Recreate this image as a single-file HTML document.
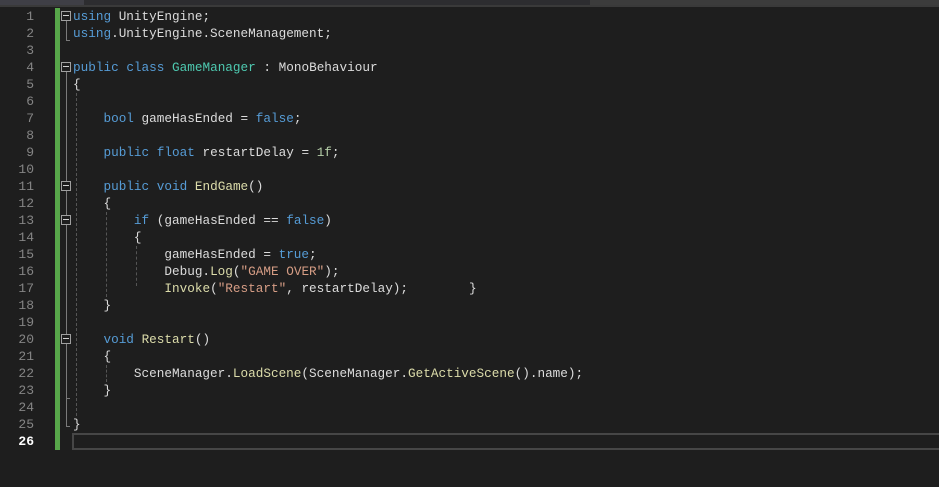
<!DOCTYPE html>
<html><head><style>
body{margin:0;width:939px;height:487px;background:#1e1e1e;overflow:hidden;position:relative;font-family:"Liberation Mono",monospace;}
.top{position:absolute;left:0;top:0;width:939px;height:6px;background:#2d2d30;}
.top .t1{position:absolute;left:0;top:0;width:84px;height:5px;background:#3f3f46;}
.top .t2{position:absolute;left:590px;top:0;width:349px;height:6px;background:#3c3c3c;}
.top .t3{position:absolute;left:0;top:5px;width:939px;height:2px;background:#3a3a3a;}
.ln{position:absolute;left:0;width:34px;text-align:right;color:#858585;font-size:13px;line-height:17px;}
.green{position:absolute;left:55px;top:8px;width:5px;height:442px;background:#57a64a;}
.code{position:absolute;left:73px;top:8px;font-size:12.7px;line-height:17px;color:#dcdcdc;white-space:pre;}
.k{color:#569cd6}.c{color:#4ec9b0}.m{color:#dcdcaa}.s{color:#d69d85}.n{color:#b5cea8}
.fold{position:absolute;left:61px;width:10px;height:10px;border:1px solid #a0a0a0;box-sizing:border-box;background:#1e1e1e;}
.fold:after{content:"";position:absolute;left:1px;top:3px;width:6px;height:1px;background:#d0d0d0;}
.vl{position:absolute;width:1px;background:#7a7a7a;}
.dl{position:absolute;width:0;border-left:1px dashed #555;}
.cur{position:absolute;left:72px;top:433px;width:870px;height:17px;border:2px solid #464646;box-sizing:border-box;}
</style></head><body>
<div class="top"><div class="t1"></div><div class="t2"></div><div class="t3"></div></div>
<div class="ln" style="top:8px">1<br>2<br>3<br>4<br>5<br>6<br>7<br>8<br>9<br>10<br>11<br>12<br>13<br>14<br>15<br>16<br>17<br>18<br>19<br>20<br>21<br>22<br>23<br>24<br>25<br><span style="color:#fff;font-weight:bold">26</span></div>
<div class="green"></div>
<div class="vl" style="left:66px;top:20px;height:21px"></div>
<div class="vl" style="left:66px;top:40px;width:4px;height:1px"></div>
<div class="fold" style="top:11px"></div>
<div class="vl" style="left:66px;top:71px;height:356px"></div>
<div class="vl" style="left:66px;top:426px;width:4px;height:1px"></div>
<div class="fold" style="top:62px"></div>
<div class="fold" style="top:181px"></div>
<div class="fold" style="top:215px"></div>
<div class="fold" style="top:334px"></div>
<div class="vl" style="left:66px;top:398px;width:4px;height:1px"></div>
<div class="dl" style="left:76px;top:93px;height:323px"></div>
<div class="dl" style="left:106px;top:212px;height:85px"></div>
<div class="dl" style="left:136px;top:246px;height:40px"></div>
<div class="dl" style="left:106px;top:365px;height:17px"></div>
<div class="code"><span class="k">using</span> UnityEngine;
<span class="k">using</span>.UnityEngine.SceneManagement;

<span class="k">public</span> <span class="k">class</span> <span class="c">GameManager</span> : MonoBehaviour
{

    <span class="k">bool</span> gameHasEnded = <span class="k">false</span>;

    <span class="k">public</span> <span class="k">float</span> restartDelay = <span class="n">1f</span>;

    <span class="k">public</span> <span class="k">void</span> <span class="m">EndGame</span>()
    {
        <span class="k">if</span> (gameHasEnded == <span class="k">false</span>)
        {
            gameHasEnded = <span class="k">true</span>;
            Debug.<span class="m">Log</span>(<span class="s">"GAME OVER"</span>);
            <span class="m">Invoke</span>(<span class="s">"Restart"</span>, restartDelay);        }
    }

    <span class="k">void</span> <span class="m">Restart</span>()
    {
        SceneManager.<span class="m">LoadScene</span>(SceneManager.<span class="m">GetActiveScene</span>().name);
    }

}
</div>
<div class="cur"></div>
</body></html>
